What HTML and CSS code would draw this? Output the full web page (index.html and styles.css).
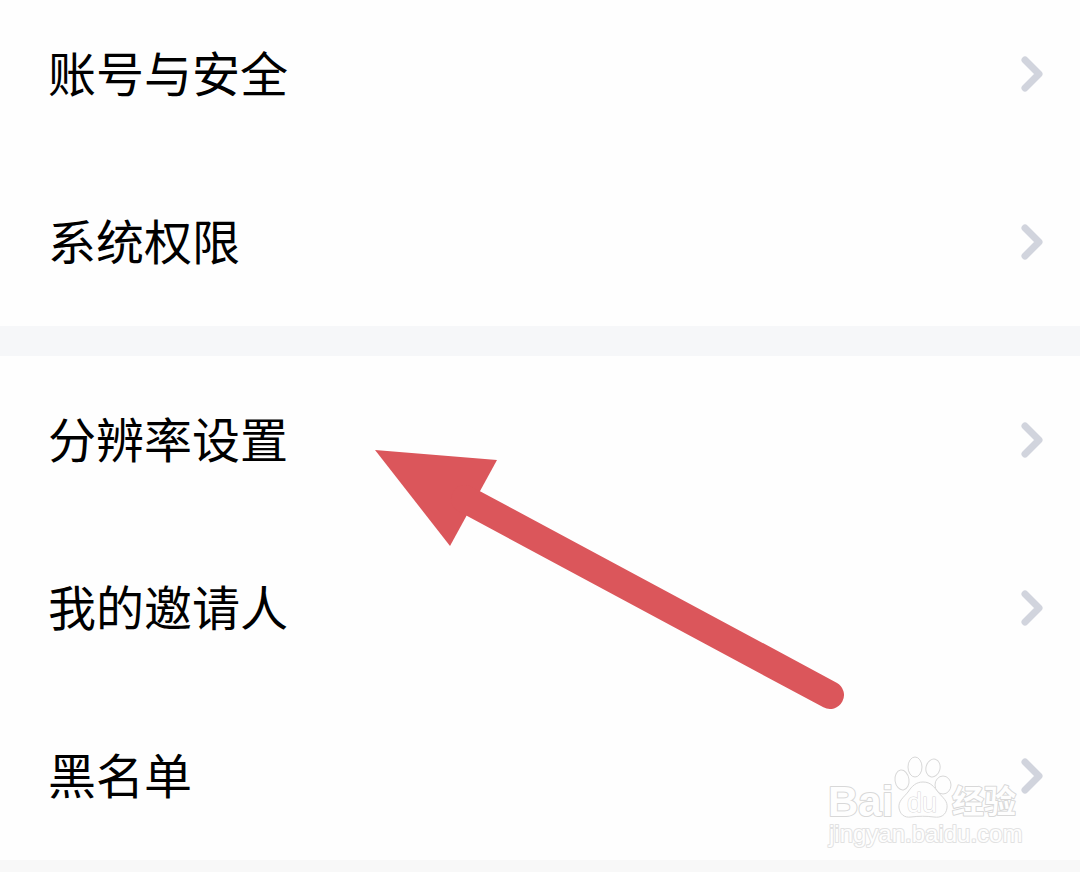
FILE: index.html
```
<!DOCTYPE html>
<html lang="zh-CN">
<head>
    <meta charset="UTF-8">
    <meta name="viewport" content="width=device-width, initial-scale=1.0">
    <title>设置</title>
    <link rel="stylesheet" href="styles.css">
</head>
<body>
    <main class="settings">
        <nav class="group group-first">
            <a class="row" href="#account">
                <span class="label">账号与安全</span>
                <svg class="chevron" viewBox="0 0 24 40" aria-hidden="true"><path d="M5 6l14 14L5 34"/></svg>
            </a>
            <a class="row" href="#permissions">
                <span class="label">系统权限</span>
                <svg class="chevron" viewBox="0 0 24 40" aria-hidden="true"><path d="M5 6l14 14L5 34"/></svg>
            </a>
        </nav>
        <nav class="group">
            <a class="row" href="#resolution">
                <span class="label">分辨率设置</span>
                <svg class="chevron" viewBox="0 0 24 40" aria-hidden="true"><path d="M5 6l14 14L5 34"/></svg>
            </a>
            <a class="row" href="#inviter">
                <span class="label">我的邀请人</span>
                <svg class="chevron" viewBox="0 0 24 40" aria-hidden="true"><path d="M5 6l14 14L5 34"/></svg>
            </a>
            <a class="row" href="#blacklist">
                <span class="label">黑名单</span>
                <svg class="chevron" viewBox="0 0 24 40" aria-hidden="true"><path d="M5 6l14 14L5 34"/></svg>
            </a>

            <svg class="arrow" viewBox="0 0 480 270" aria-hidden="true">
                <path class="arrow-head" d="M5 4l122 10-47 86z"/>
                <path class="arrow-line" d="M95 53l365 196"/>
            </svg>

            <svg class="watermark" viewBox="0 0 200 100" role="img" aria-label="Baidu 经验">
                <g class="outline">
                    <text class="brand" x="4" y="66">Bai</text>
                    <ellipse cx="78" cy="30" rx="7" ry="10" transform="rotate(-8 78 30)"/>
                    <ellipse cx="91" cy="17" rx="7" ry="10"/>
                    <ellipse cx="109" cy="18" rx="7" ry="9" transform="rotate(15 109 18)"/>
                    <ellipse cx="119" cy="35" rx="8" ry="9"/>
                    <path d="M99 32c8 0 11 5 15 10 5 6 10 9 9 16-1 7-6 10-13 9-8-1-15-1-23 0-7 1-11-3-12-9-1-7 5-11 9-16 4-6 8-10 15-10z"/>
                    <text class="du" x="83" y="62">du</text>
                    <text class="cjk" x="128" y="63">经验</text>
                    <text class="url" x="5" y="92">jingyan.baidu.com</text>
                </g>
            </svg>
        </nav>
    </main>
</body>
</html>
```
FILE: styles.css
```
* { box-sizing: border-box; }
body { margin: 0; background: #f8f8f8; font-family: "Noto Sans CJK SC", sans-serif; }
.settings { display: flex; flex-direction: column; gap: 30px; background: #f6f7f9; }
.group { position: relative; display: flex; flex-direction: column; gap: 20px; padding: 10px 0; background: #fefefe; }
.group-first { padding-top: 0; }
.row { display: flex; align-items: center; justify-content: space-between; height: 148px; padding: 0 36px 0 48px; color: #000; font-size: 48px; line-height: 72px; text-decoration: none; }
.label { padding-bottom: 6px; }
.chevron { width: 24px; height: 40px; fill: none; stroke: #d1d4dd; stroke-width: 7; stroke-linecap: round; stroke-linejoin: round; }

/* pointer to the resolution row */
.arrow { position: absolute; top: 90px; left: 370px; width: 480px; height: 270px; pointer-events: none; }
.arrow-head { fill: #db565b; }
.arrow-line { fill: none; stroke: #db565b; stroke-width: 28; stroke-linecap: round; }

.watermark { position: absolute; right: 56px; bottom: 10px; width: 200px; height: 100px; overflow: visible; pointer-events: none; }
.outline { fill: #fefefe; stroke: #d8d8d8; stroke-width: 1; }
.outline text { stroke-width: 2; stroke-linejoin: round; paint-order: stroke; }
.brand { font: bold 42px "Liberation Sans", sans-serif; }
.outline .du { font: 27px "Liberation Sans", sans-serif; stroke-width: 1; }
.cjk { font: bold 32px "Noto Sans CJK SC", sans-serif; }
.outline .url { font: 24px "Liberation Sans", sans-serif; stroke: #e2e2e2; }
```
